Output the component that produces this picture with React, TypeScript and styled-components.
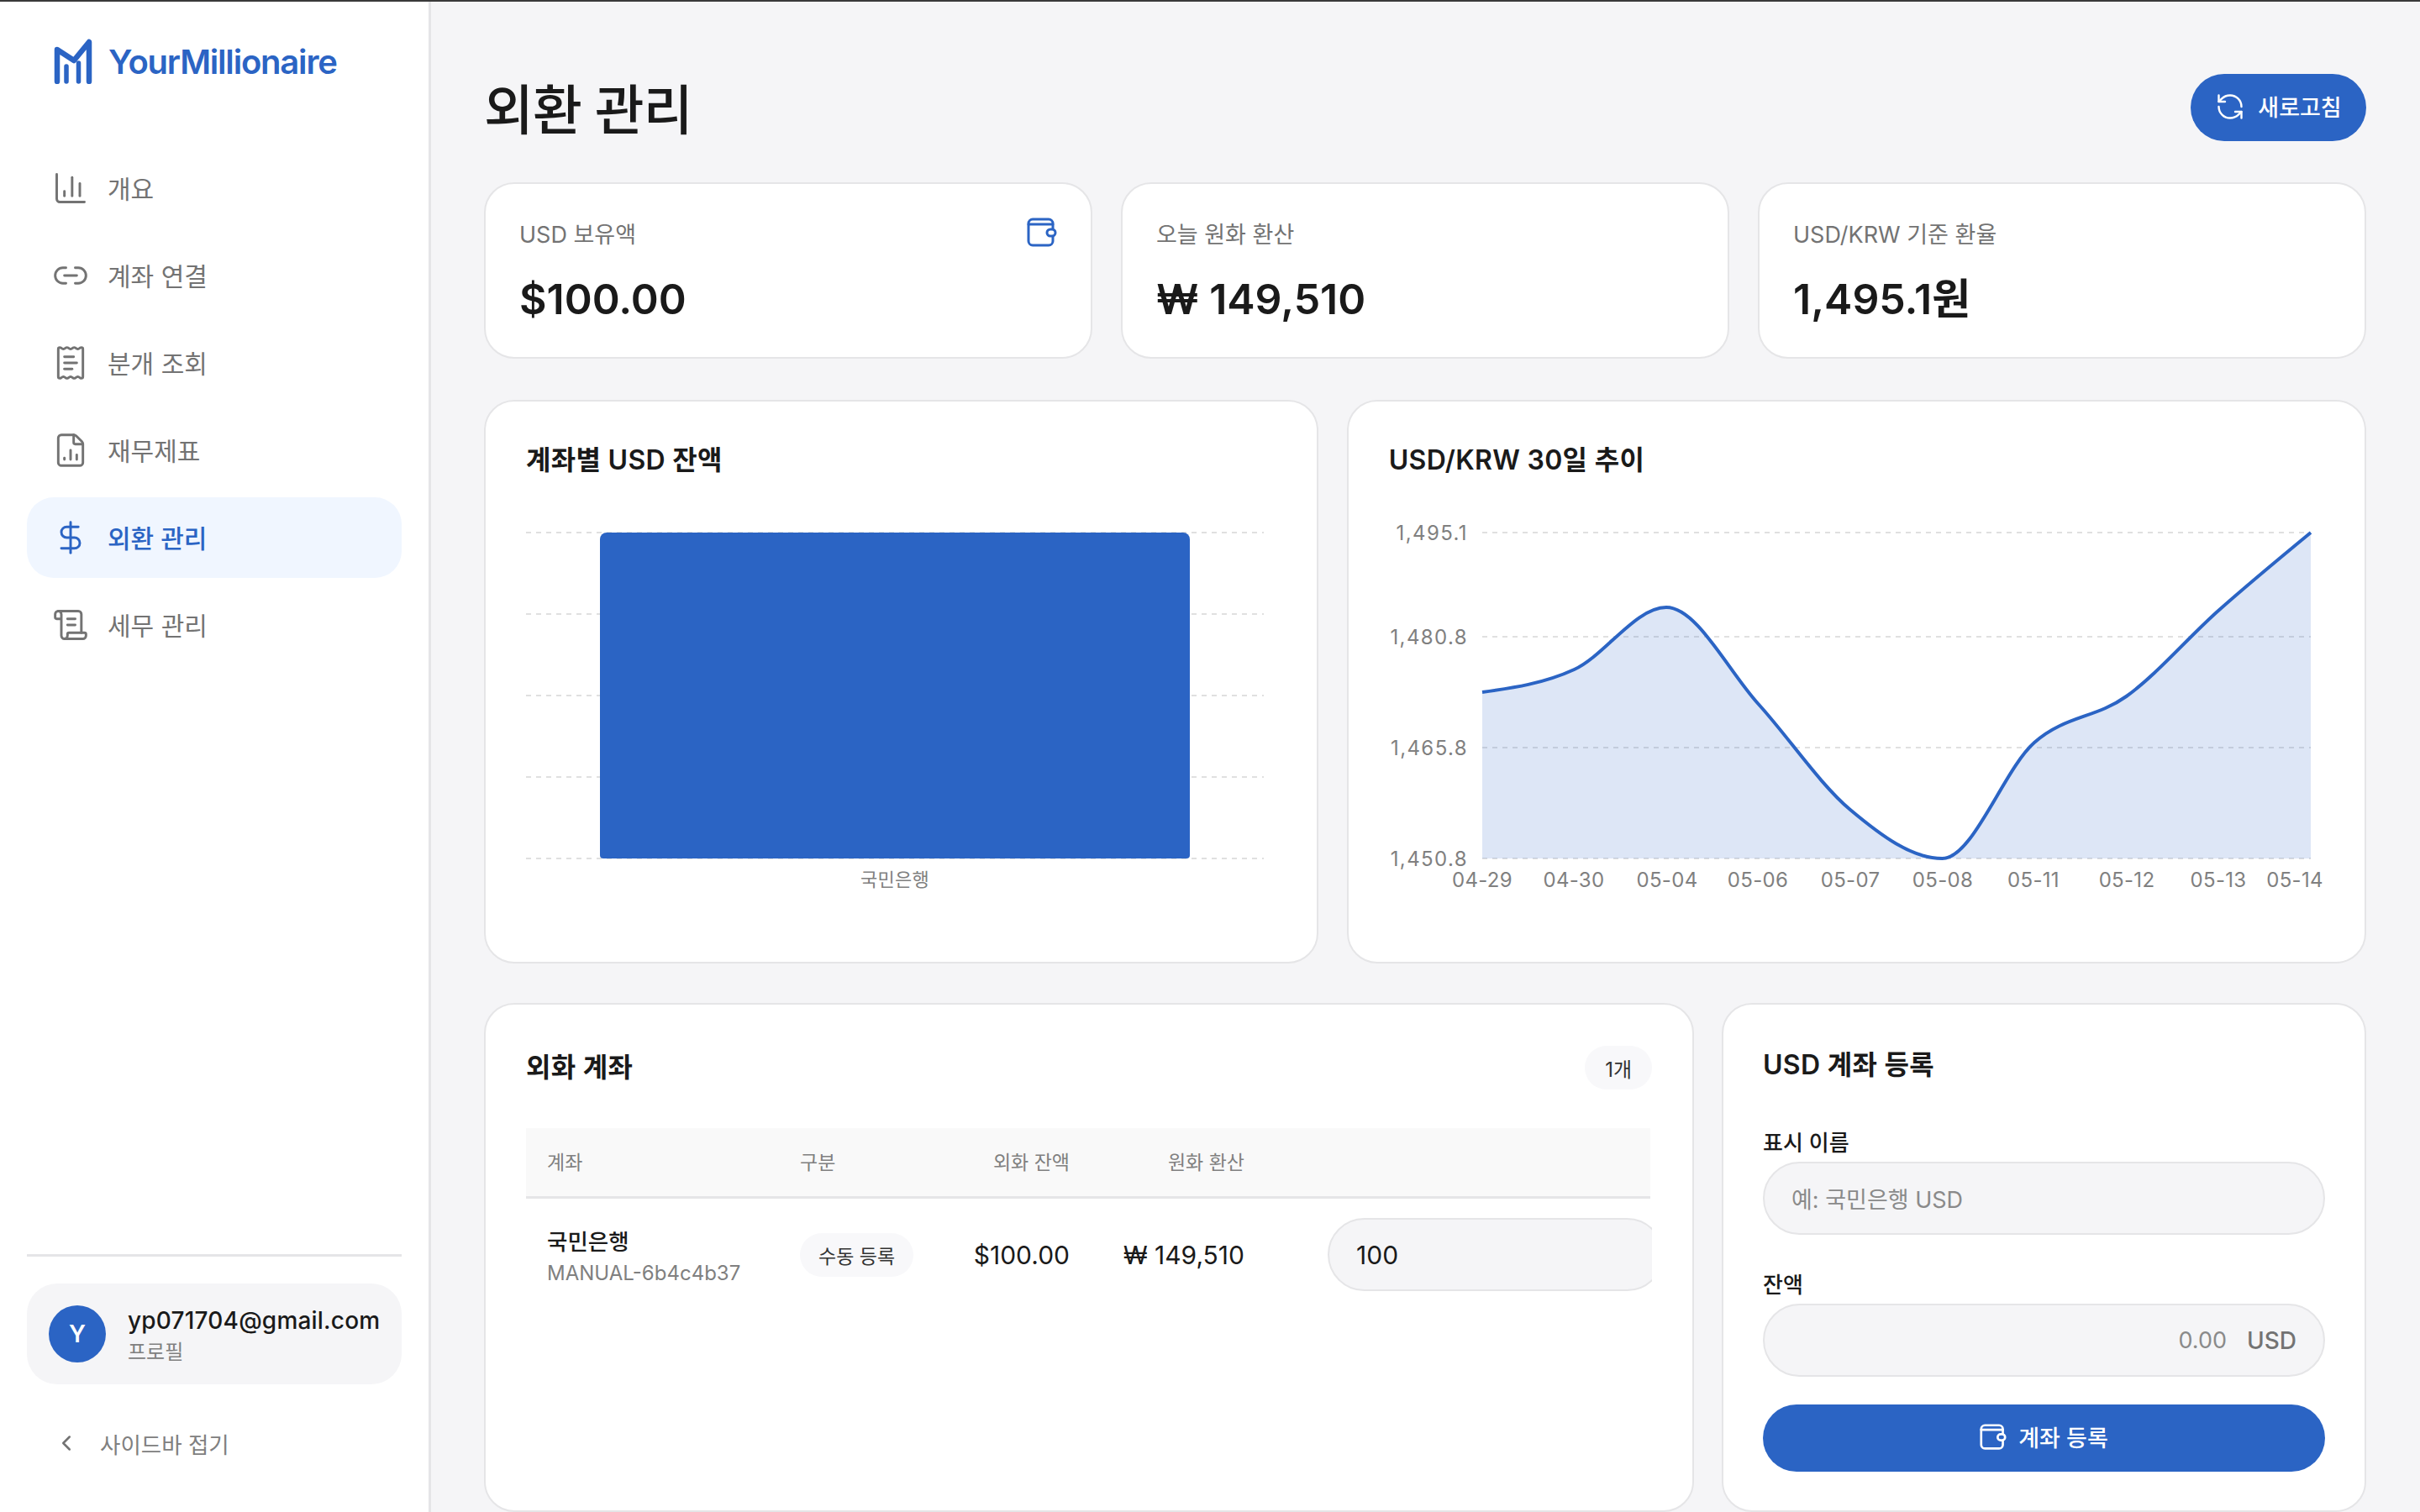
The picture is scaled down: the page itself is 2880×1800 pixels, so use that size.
import { ChartColumn, ChevronLeft, DollarSign, FileChartColumn, Link2, ReceiptText, RefreshCcw, ScrollText } from "lucide-react";
import styled, { createGlobalStyle } from "styled-components";

const BLUE = "#2b64c4";

const GlobalStyle = createGlobalStyle`
  * { box-sizing: border-box; }
  html, body { margin: 0; padding: 0; }
  body {
    height: 1800px;
    overflow: hidden;
    background: #f5f5f7;
    font-family: Inter, "Noto Sans CJK KR", sans-serif;
    color: #1a1a1a;
  }
`;

const Shell = styled.div`
  display: flex;
  height: 1800px;
  border-top: 2px solid #3a3a3a;
`;

const Sidebar = styled.aside`
  flex: 0 0 513px;
  display: flex;
  flex-direction: column;
  background: #fff;
  border-right: 3px solid #e5e5e7;
  padding: 44px 32px 0;
`;

const Brand = styled.div`
  display: flex;
  align-items: center;
  gap: 19px;
  height: 54px;
  padding-left: 32px;
  margin-bottom: 76px;
  color: ${BLUE};
  font-size: 40px;
  font-weight: 600;
  letter-spacing: -1.2px;
`;

const Nav = styled.nav`
  flex: 1;
  display: flex;
  flex-direction: column;
  gap: 8px;
`;

const NavItem = styled.a<{ $active?: boolean }>`
  display: flex;
  align-items: center;
  gap: 22px;
  height: 96px;
  padding-left: 30px;
  border-radius: 32px;
  font-size: 30px;
  font-weight: ${(p) => (p.$active ? 500 : 400)};
  color: ${(p) => (p.$active ? BLUE : "#737373")};
  background: ${(p) => (p.$active ? "#f0f6ff" : "transparent")};
  svg { width: 44px; height: 44px; stroke-width: 1.6; flex: none; }
`;

const NavLabel = styled.span`
  margin-top: -3px;
`;

const Divider = styled.hr`
  width: 100%;
  margin: 0 0 32px;
  border: 0;
  border-top: 3px solid #e5e5e7;
`;

const Profile = styled.div`
  display: flex;
  align-items: center;
  gap: 26px;
  height: 120px;
  padding-left: 26px;
  border-radius: 36px;
  background: #f5f5f7;
`;

const Avatar = styled.div`
  width: 68px;
  height: 68px;
  display: grid;
  place-items: center;
  border-radius: 50%;
  background: ${BLUE};
  color: #fff;
  font-size: 28px;
  font-weight: 600;
`;

const ProfileText = styled.div`
  display: flex;
  flex-direction: column;
  gap: 5px;
  margin-top: 2px;
`;

const Email = styled.span`
  font-size: 28px;
  font-weight: 500;
  letter-spacing: 0.2px;
  line-height: 36px;
`;

const ProfileRole = styled.span`
  font-size: 24px;
  line-height: 30px;
  color: #808080;
`;

const Collapse = styled.div`
  display: flex;
  align-items: center;
  gap: 25px;
  height: 104px;
  margin: 18px 0 30px;
  padding-left: 32px;
  font-size: 26.5px;
  color: #808080;
  svg { width: 30px; height: 30px; color: #737373; }
`;

const Main = styled.main`
  flex: 1;
  min-width: 0;
  display: flex;
  flex-direction: column;
  gap: 49px;
  padding: 86px 64px 0 63px;
`;

const Header = styled.header`
  display: flex;
  align-items: center;
  justify-content: space-between;
  height: 80px;
`;

const Title = styled.h1`
  margin: 0;
  padding-bottom: 5px;
  font-size: 64px;
  font-weight: 500;
  letter-spacing: -1px;
`;

const PrimaryButton = styled.button<{ $wide?: boolean }>`
  display: flex;
  align-items: center;
  justify-content: center;
  gap: ${(p) => (p.$wide ? 14 : 15)}px;
  width: ${(p) => (p.$wide ? "100%" : "209px")};
  height: 80px;
  padding: 0 0 3px;
  border: 0;
  border-radius: 40px;
  background: ${BLUE};
  color: #fff;
  font: 500 27px Inter, "Noto Sans CJK KR", sans-serif;
  svg.lucide { width: 36px; height: 36px; stroke-width: 1.6; }
`;

const StatGrid = styled.section`
  display: grid;
  grid-template-columns: repeat(3, 1fr);
  gap: 34px;
`;

const Card = styled.div`
  background: #fff;
  border: 2px solid #e5e5e7;
  border-radius: 36px;
  min-width: 0;
`;

const StatCard = styled(Card)`
  height: 210px;
  padding: 40px 40px 0;
`;

const StatTop = styled.div`
  display: flex;
  justify-content: space-between;
  align-items: center;
  height: 36px;
  color: ${BLUE};
`;

const StatLabel = styled.span`
  font-size: 27px;
  color: #737373;
`;

const StatValue = styled.div`
  margin-top: 31px;
  font-size: 50px;
  line-height: 60px;
  font-weight: 600;
`;

const ChartGrid = styled.section`
  display: grid;
  grid-template-columns: 9fr 11fr;
  gap: 34px;
`;

const ChartCard = styled(Card)`
  height: 671px;
  padding: 50px 46px 0 48px;
`;

const CardTitle = styled.h2`
  margin: 0;
  font-size: 32px;
  line-height: 40px;
  font-weight: 600;
  letter-spacing: 0.3px;
`;

const ChartSvg = styled.svg`
  display: block;
  overflow: visible;
  margin-top: 65px;
`;

const AxisText = styled.text<{ $spaced?: boolean; $small?: boolean }>`
  font-size: ${(p) => (p.$small ? 22 : 24)}px;
  letter-spacing: ${(p) => (p.$spaced ? 1.4 : 0.3)}px;
  fill: #808080;
`;

const BottomGrid = styled.section`
  flex: 1;
  display: grid;
  grid-template-columns: 1fr 767px;
  gap: 33px;
  margin-top: -2px;
`;

const AccountsCard = styled(Card)`
  padding: 49px 48px 0;
`;

const AccountsHead = styled.div`
  display: flex;
  align-items: center;
  justify-content: space-between;
  height: 52px;
  margin-bottom: 46px;
`;

const Pill = styled.span<{ $count?: boolean }>`
  display: inline-flex;
  align-items: center;
  height: 52px;
  padding: 0 ${(p) => (p.$count ? 24 : 22)}px;
  border-radius: 26px;
  background: #f8f8fa;
  font-size: ${(p) => (p.$count ? 24 : 23)}px;
  color: #333;
`;

const TableClip = styled.div`
  overflow: hidden;
`;

const Table = styled.table`
  width: 1338px;
  table-layout: fixed;
  border-collapse: collapse;
`;

const HeadCell = styled.th<{ $right?: boolean; $w: number }>`
  width: ${(p) => p.$w}px;
  height: 82px;
  padding: 0 25px 2px;
  background: #f9f9f9;
  border-bottom: 3px solid #e5e5e7;
  text-align: ${(p) => (p.$right ? "right" : "left")};
  font-size: 23px;
  font-weight: 400;
  color: #808080;
`;

const BodyCell = styled.td<{ $right?: boolean }>`
  height: 136px;
  padding: 0 25px;
  text-align: ${(p) => (p.$right ? "right" : "left")};
  font-size: 30px;
  white-space: nowrap;
`;

const AccountName = styled.div`
  padding-top: 6px;
  font-size: 26.5px;
  font-weight: 500;
  line-height: 36px;
`;

const AccountCode = styled.div`
  margin-top: 2px;
  font-size: 24px;
  line-height: 36px;
  color: #808080;
`;

const InputBox = styled.div<{ $clipped?: boolean; $filled?: boolean }>`
  display: flex;
  align-items: center;
  justify-content: ${(p) => (p.$clipped ? "flex-start" : "space-between")};
  width: ${(p) => (p.$clipped ? "400px" : "100%")};
  height: 87px;
  padding: 0 32px;
  border: 2px solid #e5e5e7;
  border-radius: 44px;
  background: #f5f5f7;
  font-size: ${(p) => (p.$filled ? 30 : 27)}px;
  color: ${(p) => (p.$filled ? "#1a1a1a" : "#8a8a8a")};
`;

const AmountCell = styled(BodyCell)`
  padding: 0 0 0 74px;
`;

const FormCard = styled(Card)`
  padding: 52px 47px 0;
`;

const FieldLabel = styled.label`
  display: block;
  margin: 0 0 4px;
  font-size: 26px;
  line-height: 36px;
  font-weight: 500;
`;

const Field = styled.div<{ $tight?: boolean }>`
  margin-bottom: ${(p) => (p.$tight ? 33 : 42)}px;
`;

const FormTitle = styled(CardTitle)`
  margin-bottom: 55px;
`;

const Spacer = styled.span`
  flex: 1;
`;

const Unit = styled.span`
  margin-left: 24px;
  font-size: 28px;
  font-weight: 500;
  color: #737373;
`;

const WalletIcon = ({ size = 36 }: { size?: number }) => (
  <svg width={size} height={size} viewBox="0 0 36 36" fill="none" stroke="currentColor" strokeWidth={3} strokeLinecap="round" strokeLinejoin="round">
    <path d="M31 13V7a5 5 0 0 0-5-5H7a5 5 0 0 0-5 5v21a5 5 0 0 0 5 5h19a5 5 0 0 0 5-5v-5" />
    <path d="M2 8h29" />
    <rect x="24" y="14" width="10" height="8" rx="4" />
  </svg>
);

const BrandLogo = () => (
  <svg width="46" height="54" viewBox="0 0 46 54" fill="none">
    <path d="M4 51V13l20 13L42 4v47" stroke={BLUE} strokeWidth="6.5" strokeLinecap="round" strokeLinejoin="round" />
    <path d="M15 33v18M29.5 29v22" stroke={BLUE} strokeWidth="5.5" strokeLinecap="round" />
  </svg>
);

const barGrid = [0, 97, 194, 291, 388];

const BarChart = () => (
  <ChartSvg width={878} height={430} viewBox="0 0 878 430">
    {barGrid.map((y) => (
      <line key={y} x1="0" x2="878" y1={y + 1} y2={y + 1} stroke="#e0e0e0" strokeWidth="2" strokeDasharray="6 6" />
    ))}
    <path d="M88 9a8 8 0 0 1 8-8h686a8 8 0 0 1 8 8v376a4 4 0 0 1-4 4H92a4 4 0 0 1-4-4z" fill={BLUE} />
    <AxisText $small x="439" y="422" textAnchor="middle">국민은행</AxisText>
  </ChartSvg>
);

const trend = [
  { x: 111, y: 191, label: "04-29", lx: 111 },
  { x: 220.5, y: 164, label: "04-30", lx: 220 },
  { x: 330, y: 90, label: "05-04", lx: 331 },
  { x: 439.5, y: 205, label: "05-06", lx: 439 },
  { x: 549, y: 331, label: "05-07", lx: 549 },
  { x: 658.5, y: 389, label: "05-08", lx: 659 },
  { x: 768, y: 251, label: "05-11", lx: 767 },
  { x: 877.5, y: 196, label: "05-12", lx: 878 },
  { x: 987, y: 94, label: "05-13", lx: 987 },
  { x: 1097, y: 1, label: "05-14", lx: 1078 },
];

// same tangents as a monotone-x line
const monotonePath = (pts: { x: number; y: number }[]) => {
  const n = pts.length;
  const slopes = pts.slice(1).map((p, i) => (p.y - pts[i].y) / (p.x - pts[i].x));
  const tan = pts.map((_, i) => {
    if (i === 0 || i === n - 1) return 0;
    const a = slopes[i - 1];
    const b = slopes[i];
    if (a * b <= 0) return 0;
    const h0 = pts[i].x - pts[i - 1].x;
    const h1 = pts[i + 1].x - pts[i].x;
    const p = (a * h1 + b * h0) / (h0 + h1);
    return (Math.sign(a) + Math.sign(b)) * Math.min(Math.abs(a), Math.abs(b), 0.5 * Math.abs(p));
  });
  tan[0] = (3 * slopes[0] - tan[1]) / 2;
  tan[n - 1] = (3 * slopes[n - 2] - tan[n - 2]) / 2;
  let d = `M${pts[0].x} ${pts[0].y}`;
  for (let i = 0; i < n - 1; i++) {
    const dx = (pts[i + 1].x - pts[i].x) / 3;
    d += `C${pts[i].x + dx} ${pts[i].y + tan[i] * dx} ${pts[i + 1].x - dx} ${pts[i + 1].y - tan[i + 1] * dx} ${pts[i + 1].x} ${pts[i + 1].y}`;
  }
  return d;
};

const yTicks = [
  { y: 1, label: "1,495.1" },
  { y: 125, label: "1,480.8" },
  { y: 257, label: "1,465.8" },
  { y: 389, label: "1,450.8" },
];

const LineChart = () => {
  const line = monotonePath(trend);
  return (
    <ChartSvg width={1116} height={430} viewBox="0 0 1116 430">
      {yTicks.map((t) => (
        <g key={t.label}>
          <line x1="111" x2="1097" y1={t.y} y2={t.y} stroke="#e0e0e0" strokeWidth="2" strokeDasharray="6 6" />
          <AxisText $spaced x="94" y={t.y + 9} textAnchor="end">{t.label}</AxisText>
        </g>
      ))}
      <path d={`${line}L1097 389L111 389Z`} fill={BLUE} fillOpacity="0.16" />
      <path d={line} fill="none" stroke={BLUE} strokeWidth="4" />
      {trend.map((p) => (
        <AxisText key={p.label} x={p.lx} y="423" textAnchor="middle">{p.label}</AxisText>
      ))}
    </ChartSvg>
  );
};

const navItems = [
  { label: "개요", icon: <ChartColumn /> },
  { label: "계좌 연결", icon: <Link2 /> },
  { label: "분개 조회", icon: <ReceiptText /> },
  { label: "재무제표", icon: <FileChartColumn /> },
  { label: "외환 관리", icon: <DollarSign />, active: true },
  { label: "세무 관리", icon: <ScrollText /> },
];

const App = () => {
  return (
    <>
      <GlobalStyle />
      <Shell>
        <Sidebar>
          <Brand>
            <BrandLogo />
            YourMillionaire
          </Brand>
          <Nav>
            {navItems.map((item) => (
              <NavItem key={item.label} $active={item.active}>
                {item.icon}
                <NavLabel>{item.label}</NavLabel>
              </NavItem>
            ))}
          </Nav>
          <Divider />
          <Profile>
            <Avatar>Y</Avatar>
            <ProfileText>
              <Email>yp071704@gmail.com</Email>
              <ProfileRole>프로필</ProfileRole>
            </ProfileText>
          </Profile>
          <Collapse>
            <ChevronLeft />
            사이드바 접기
          </Collapse>
        </Sidebar>
        <Main>
          <Header>
            <Title>외환 관리</Title>
            <PrimaryButton>
              <RefreshCcw />
              새로고침
            </PrimaryButton>
          </Header>
          <StatGrid>
            <StatCard>
              <StatTop>
                <StatLabel>USD 보유액</StatLabel>
                <WalletIcon />
              </StatTop>
              <StatValue>$100.00</StatValue>
            </StatCard>
            <StatCard>
              <StatTop>
                <StatLabel>오늘 원화 환산</StatLabel>
              </StatTop>
              <StatValue>₩ 149,510</StatValue>
            </StatCard>
            <StatCard>
              <StatTop>
                <StatLabel>USD/KRW 기준 환율</StatLabel>
              </StatTop>
              <StatValue>1,495.1원</StatValue>
            </StatCard>
          </StatGrid>
          <ChartGrid>
            <ChartCard>
              <CardTitle>계좌별 USD 잔액</CardTitle>
              <BarChart />
            </ChartCard>
            <ChartCard>
              <CardTitle>USD/KRW 30일 추이</CardTitle>
              <LineChart />
            </ChartCard>
          </ChartGrid>
          <BottomGrid>
            <AccountsCard>
              <AccountsHead>
                <CardTitle>외화 계좌</CardTitle>
                <Pill $count>1개</Pill>
              </AccountsHead>
              <TableClip>
                <Table>
                  <thead>
                    <tr>
                      <HeadCell $w={301}>계좌</HeadCell>
                      <HeadCell $w={180}>구분</HeadCell>
                      <HeadCell $w={191} $right>외화 잔액</HeadCell>
                      <HeadCell $w={208} $right>원화 환산</HeadCell>
                      <HeadCell $w={458} />
                    </tr>
                  </thead>
                  <tbody>
                    <tr>
                      <BodyCell>
                        <AccountName>국민은행</AccountName>
                        <AccountCode>MANUAL-6b4c4b37</AccountCode>
                      </BodyCell>
                      <BodyCell>
                        <Pill>수동 등록</Pill>
                      </BodyCell>
                      <BodyCell $right>$100.00</BodyCell>
                      <BodyCell $right>₩ 149,510</BodyCell>
                      <AmountCell>
                        <InputBox $clipped $filled>100</InputBox>
                      </AmountCell>
                    </tr>
                  </tbody>
                </Table>
              </TableClip>
            </AccountsCard>
            <FormCard>
              <FormTitle>USD 계좌 등록</FormTitle>
              <Field>
                <FieldLabel>표시 이름</FieldLabel>
                <InputBox>예: 국민은행 USD</InputBox>
              </Field>
              <Field $tight>
                <FieldLabel>잔액</FieldLabel>
                <InputBox>
                  <Spacer />
                  0.00
                  <Unit>USD</Unit>
                </InputBox>
              </Field>
              <PrimaryButton $wide>
                <WalletIcon size={32} />
                계좌 등록
              </PrimaryButton>
            </FormCard>
          </BottomGrid>
        </Main>
      </Shell>
    </>
  );
};

export default App;
